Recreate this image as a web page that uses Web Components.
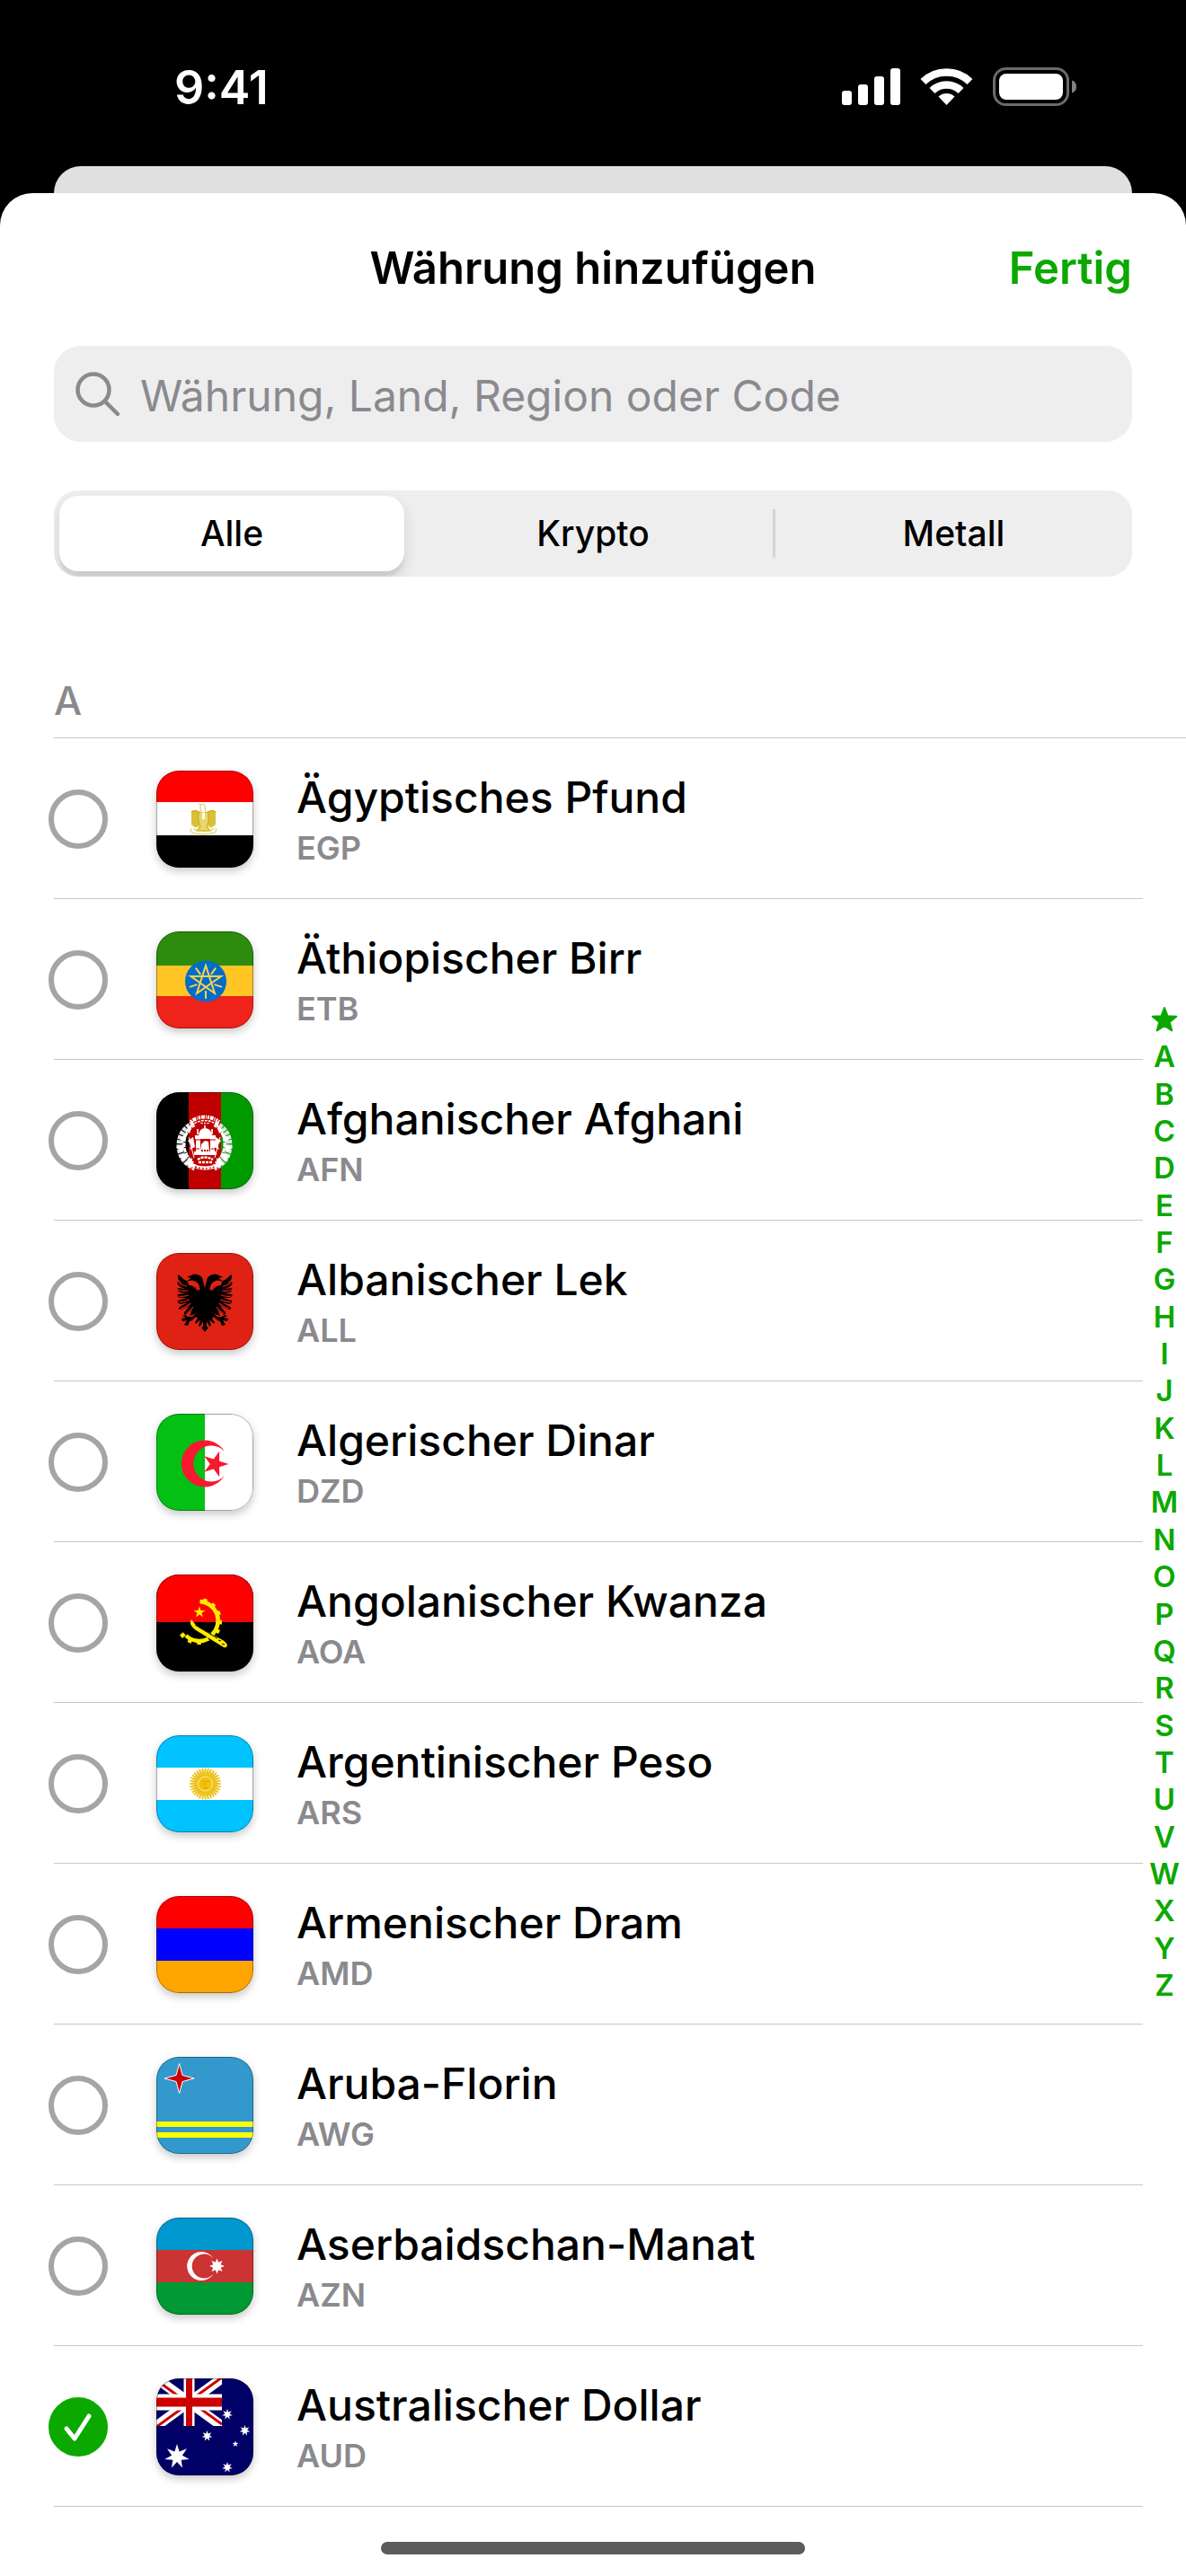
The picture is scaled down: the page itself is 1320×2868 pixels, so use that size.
<!DOCTYPE html>
<html lang="de">
<head>
<meta charset="utf-8">
<meta name="viewport" content="width=device-width, initial-scale=1">
<title>Währung hinzufügen</title>
<style>
    body {
        margin: 0;
        background-color: #000;
        font-family: Inter, "Liberation Sans", sans-serif;
        --accent: #0ba800;
        --fill: #eeeeef;
        --muted: #8a8a8e;
        --line: #c6c6c8;
    }
</style>
</head>
<body>
<currency-app>
    <status-bar slot="status">9:41</status-bar>
    <sheet-header slot="header">Währung hinzufügen</sheet-header>
    <search-field slot="search" placeholder="Währung, Land, Region oder Code"></search-field>
    <segment-control slot="segments" options="Alle,Krypto,Metall"></segment-control>
    <section-title slot="title">A</section-title>
    <currency-row code="EGP">Ägyptisches Pfund</currency-row>
    <currency-row code="ETB">Äthiopischer Birr</currency-row>
    <currency-row code="AFN">Afghanischer Afghani</currency-row>
    <currency-row code="ALL">Albanischer Lek</currency-row>
    <currency-row code="DZD">Algerischer Dinar</currency-row>
    <currency-row code="AOA">Angolanischer Kwanza</currency-row>
    <currency-row code="ARS">Argentinischer Peso</currency-row>
    <currency-row code="AMD">Armenischer Dram</currency-row>
    <currency-row code="AWG">Aruba-Florin</currency-row>
    <currency-row code="AZN">Aserbaidschan-Manat</currency-row>
    <currency-row code="AUD" checked>Australischer Dollar</currency-row>
    <letter-index slot="index"></letter-index>
</currency-app>

<script>
// points of a star, first tip at the given angle
function star(cx, cy, r, inner, n, start = -90) {
    const pts = [];
    for (let i = 0; i < n * 2; i++) {
        const a = (start + i * 180 / n) * Math.PI / 180;
        const rad = i % 2 ? inner : r;
        pts.push((cx + rad * Math.cos(a)).toFixed(2) + ',' + (cy + rad * Math.sin(a)).toFixed(2));
    }
    return pts.join(' ');
}

// n copies of a shape turned around a point
function spin(shape, n, cx, cy, from = 0, step = 360 / n) {
    let out = '';
    for (let i = 0; i < n; i++) {
        out += `<g transform="rotate(${from + i * step} ${cx} ${cy})">${shape}</g>`;
    }
    return out;
}

function bands(a, b, c, y1 = 36, y2 = 72) {
    return `<rect width="108" height="${y1}" fill="${a}"/>
        <rect y="${y1}" width="108" height="${y2 - y1}" fill="${b}"/>
        <rect y="${y2}" width="108" height="${108 - y2}" fill="${c}"/>`;
}

const eagleHalf = `
    <path d="M54 39L52 31Q52 27 48 25Q43 22 38 25L34 27L39 28Q35 30 34 32Q40 29 44 32Q48 34 48 39L46 41Q44 35 37 35Q35 34 34 31
        Q30 30 27 26L24 24Q23 29 27 32L31 34L24 32Q22 35 27 38L32 40L24 39Q23 43 27 44L33 45L24 46Q22 49 27 50L34 50
        L24 53Q23 56 27 57L35 55L26 60Q23 63 28 63L37 59L32 65Q29 68 33 69L40 63L37 70L43 68L47 65L40 71L35 71Q32 68 29 70L33 72L28 73
        L29 76L34 75L31 80L35 81L37 76L40 75L44 71L46 73L43 77Q44 80 46 77L49 74L47 81Q49 83 51 78L52 76L52 82L50 83L54 88Z"/>
    <path d="M46 42Q43 36 36 35M25 33Q30 37 34 37M24 41Q30 43 35 42M24 48Q30 49 36 47M25 55Q31 54 37 52M27 62Q34 60 38 56M33 68Q39 63 41 60" fill="none" stroke="#e02214" stroke-width="1.2"/>
    <path d="M36 35Q45 34 48 41" fill="none" stroke="#e02214" stroke-width="2"/>`;

const wreathHalf = `
    <path d="M42 35Q26 42 26 60Q27 77 43 84" fill="none" stroke="#e4e4e4" stroke-width="7" stroke-dasharray="4 1"/>
    <path d="M38 40Q30 49 31 60Q32 71 41 79" fill="none" stroke="#fff" stroke-width="3" stroke-dasharray="5 1"/>
    <path d="M33 42L40 35L37 46ZM25 51L35 46L30 56ZM22 61L33 57L28 67ZM25 71L35 67L31 77ZM32 80L40 73L40 84Z" fill="#fff"/>
    <path d="M36 50L42 73" stroke="#fff" stroke-width="1"/>
    <path d="M35 54L41 50L43 61L37 64L39 59Z" fill="#fff"/>`;

const flags = {
    EGP: bands('#f00', '#fff', '#000', 35, 72) + `
        <path d="M39 46L44 44L48 47V62L44 64L39 61ZM66 46L61 44L57 47V62L61 64L66 61Z" fill="#ecdc80"/>
        <g fill="none" stroke="#cfae0c">
            <path d="M40 46V60M42 45V62M44 45V63M46 45V62M59 45V62M61 45V63M63 45V62M65 46V60" stroke-width="1.2"/>
            <path d="M39 46Q43 43 47 46L50 47M66 46Q62 43 58 46L55 47" stroke-width="1.5"/>
            <path d="M50 46L49 42Q48 39 51 37Q55 37 54 41L55 46M50 38L47 37" stroke="#dcc64a" stroke-width="1"/>
            <path d="M47 47Q46 59 49 62L45 67H60L56 62Q59 58 58 47" fill="#e7d56e" stroke-width="1.2"/>
            <path d="M39 64Q36 69 44 70Q52 72 60 70Q69 69 66 64M41 65Q52 70 64 65" stroke="#dcc64a" stroke-width="1"/>
        </g>
        <path d="M49 46H56V53L52 57L49 53Z" fill="#e7d56e"/><path d="M51 47H54V54H51Z" fill="#fff"/>`,
    ETB: bands('#2d8b0e', '#ffc625', '#ef2319', 38, 72) + `
        <circle cx="55" cy="55.6" r="23" fill="#006dc9"/>
        <g fill="none" stroke="#ffd24c" stroke-width="2">
            <polygon points="55,38 65,69 38.5,50 72,50 45,69"/>
            ${spin('<path d="M55 66V75"/>', 5, 55, 56)}
        </g>`,
    AFN: `<path d="M0 0H36V108H0Z"/><path d="M36 0H72V108H36Z" fill="#c00000"/><path d="M72 0H108V108H72Z" fill="#009900"/>
        ${wreathHalf}<g transform="translate(107 0) scale(-1 1)">${wreathHalf}</g>
        <path d="M38 33Q54 22 70 33" fill="none" stroke="#fff" stroke-width="4" stroke-dasharray="2 1 4 1 1 1"/>
        <path d="M39 37Q54 26 69 37" fill="none" stroke="#fff" stroke-width="1.5" stroke-dasharray="3 1"/>
        <path d="M49 34L52 35M54 33V36M56 35L59 34" stroke="#fff" stroke-width="1"/>
        <path d="M54 37V40M46 41V47M62 41V47" stroke="#fff" stroke-width="1.6"/>
        <path d="M47 50Q47 40 54 40Q62 40 62 50ZM43 48H66V52H43ZM44 52H49V66H44ZM60 52H65V66H60ZM42 66H67V70H42Z" fill="#fff"/>
        <path d="M49 66L50 58L54 54L58 55L59 66Z" fill="#fff"/>
        <path d="M44 53H65M44 63H48M61 63H65" stroke="#c00000"/>
        <path d="M50 65H60" stroke="#c00000" stroke-width="2" stroke-dasharray="2 1"/>
        <path d="M46 75Q54 70 63 75M47 78H62" fill="none" stroke="#fff" stroke-width="2.5" stroke-dasharray="3 1"/>
        <path d="M36 77Q54 88 72 77L70 82Q54 91 39 82Z" fill="#fff"/>
        <path d="M43 83Q54 87 65 83" fill="none" stroke="#c00000" stroke-width="1.5" stroke-dasharray="2 2"/>`,
    ALL: `<rect width="108" height="108" fill="#e02214"/>${eagleHalf}
        <g transform="translate(108 0) scale(-1 1)">${eagleHalf}</g>`,
    DZD: `<rect width="108" height="108" fill="#fff"/><rect width="54" height="108" fill="#02c114"/>
        <path d="M76 42A26 26 0 1 0 76 69A20 20 0 1 1 76 42Z" fill="#f6192f"/>
        <polygon points="${star(65.5, 56, 15, 5.7, 5, 0)}" fill="#f6192f"/>`,
    AOA: `<rect width="108" height="108" fill="#000"/><rect width="108" height="53" fill="#f00"/>
        <g fill="#ffec00">
            <path d="M48.5 30A21.5 21.5 0 0 1 62 67M58 71.5A21.5 21.5 0 0 1 33 68" fill="none" stroke="#ffec00" stroke-width="4.5"/>
            ${spin('<rect x="45" y="26" width="4.5" height="5"/>', 5, 47, 52, 17, 25)}
            ${spin('<rect x="45" y="26" width="4.5" height="5"/>', 3, 47, 52, 178, 25)}
            <polygon points="${star(48, 42, 6.8, 2.6, 5)}"/>
            <path d="M39 50Q42 55 48 59L72 72Q78 75 79 79Q78 82 75 81L44 62Q37 57 38 52Z"/>
        </g>
        <path d="M43 56L68 71M69 73L72 74M73 77L76 78" stroke="#000" stroke-width="1" fill="none"/>`,
    ARS: bands('#00c3ff', '#fff', '#00c3ff') + `
        <g fill="#ecc21c">${spin('<path d="M53 46L53.7 36.5H55.3L56 46Z"/>', 32, 54.5, 54)}</g>
        <circle cx="54.5" cy="54" r="8" fill="#f2c40a" stroke="#fbe9a0"/>
        <path d="M50 52Q52 50 54 52M55 52Q57 50 59 52M54 53V56M52 58Q54 60 57 58" fill="none" stroke="#d6a10c" stroke-width="1"/>`,
    AMD: bands('#f00', '#00f', '#ffa500'),
    AWG: `<rect width="108" height="108" fill="#3399cc"/><path d="M0 72H108V78H0ZM0 84H108V90H0Z" fill="#ff0"/>
        <polygon points="${star(25.6, 24, 16.5, 5, 4)}" fill="#c00" stroke="#fff" stroke-width="1"/>`,
    AZN: bands('#0098cf', '#cc3333', '#009933') + `
        <path d="M64 46A16 16 0 1 0 64 62A13.5 13.5 0 1 1 64 46Z" fill="#fff"/>
        <polygon points="${star(67.5, 54, 8.5, 4.5, 8)}" fill="#fff"/>`,
    AUD: `<rect width="108" height="108" fill="#000066"/>
        <clipPath id="canton"><path d="M0 0H73V53H0Z"/></clipPath>
        <g clip-path="url(#canton)">
            <path d="M0 0L73 53M73 0L0 53" stroke="#fff" stroke-width="11"/>
            <path d="M0 2L36 28M37 25L73 51M73 -1L37 25M36 28L0 54" stroke="#c00" stroke-width="3"/>
            <path d="M36.5 0V53" stroke="#fff" stroke-width="12"/>
            <path d="M0 26.5H73" stroke="#fff" stroke-width="18"/>
            <path d="M36.5 0V53" stroke="#c00" stroke-width="7"/>
            <path d="M0 26.5H73" stroke="#c00" stroke-width="10"/>
        </g>
        <g fill="#fff">
            <polygon points="${star(23, 87, 14, 6, 7)}"/>
            <polygon points="${star(79, 40, 6, 2.7, 7)}"/>
            <polygon points="${star(56.5, 64, 6, 2.7, 7)}"/>
            <polygon points="${star(98.5, 58, 6, 2.7, 7)}"/>
            <polygon points="${star(79, 99, 6, 2.7, 7)}"/>
            <polygon points="${star(88, 73, 3.5, 1.5, 5)}"/>
        </g>`
};

class CurrencyApp extends HTMLElement {
    constructor() {
        super();
        this.attachShadow({ mode: 'open' }).innerHTML = `
            <style>
                :host {
                    display: flex;
                    flex-direction: column;
                    min-height: 100vh;
                }
                .behind {
                    height: 30px;
                    margin: 0 60px;
                    border-radius: 30px 30px 0 0;
                    background-color: #e0e0e0;
                }
                main {
                    display: flex;
                    flex: 1;
                    flex-direction: column;
                    border-radius: 36px 36px 0 0;
                    background-color: #fff;
                }
                .list {
                    display: flex;
                    align-items: flex-start;
                }
                .rows {
                    flex: 1;
                }
                .home {
                    width: 472px;
                    height: 14px;
                    margin: auto auto 24px;
                    border-radius: 7px;
                    background-color: #5c5c5c;
                }
            </style>
            <slot name="status"></slot>
            <div class="behind"></div>
            <main>
                <slot name="header"></slot>
                <slot name="search"></slot>
                <slot name="segments"></slot>
                <slot name="title"></slot>
                <div class="list">
                    <div class="rows"><slot></slot></div>
                    <slot name="index"></slot>
                </div>
                <div class="home"></div>
            </main>
        `;
    }
}

class StatusBar extends HTMLElement {
    constructor() {
        super();
        this.attachShadow({ mode: 'open' }).innerHTML = `
            <style>
                :host {
                    display: flex;
                    justify-content: space-between;
                    padding: 68px 120px 57px 194px;
                    color: #fff;
                    font-size: 52px;
                    font-weight: 600;
                    line-height: 60px;
                }
                svg {
                    display: block;
                }
            </style>
            <slot></slot>
            <svg width="270" height="60" viewBox="930 68 270 60" fill="#fff" aria-hidden="true">
                <rect x="937" y="101" width="11" height="16" rx="3"/>
                <rect x="955" y="94" width="11" height="23" rx="3"/>
                <rect x="973" y="85" width="11" height="32" rx="3"/>
                <rect x="991" y="76" width="11" height="41" rx="3"/>
                <path d="M1027.5 91A37.5 37.5 0 0 1 1079.5 91M1037.5 101A23 23 0 0 1 1069.5 101" fill="none" stroke="#fff" stroke-width="8.5"/>
                <path d="M1053.5 117L1044.5 107.5A13.5 13.5 0 0 1 1062.5 107.5Z"/>
                <rect x="1106.5" y="76.5" width="82" height="40" rx="13" fill="none" stroke="#6b6b6b" stroke-width="3"/>
                <rect x="1112" y="82" width="71" height="29" rx="8"/>
                <path d="M1193 89.5Q1198 91 1198 96.5Q1198 102 1193 103.5Z" fill="#808080"/>
            </svg>
        `;
    }
}

class SheetHeader extends HTMLElement {
    constructor() {
        super();
        this.attachShadow({ mode: 'open' }).innerHTML = `
            <style>
                :host {
                    display: grid;
                    grid-template-columns: 1fr auto 1fr;
                    align-items: center;
                    padding: 54px 60px 56px;
                    font-size: 49px;
                    line-height: 60px;
                }
                h1 {
                    grid-column: 2;
                    margin: 0;
                    font-size: inherit;
                    font-weight: 600;
                }
                button {
                    justify-self: end;
                    padding: 0;
                    border: 0;
                    background: none;
                    color: var(--accent);
                    font: inherit;
                    font-weight: 600;
                }
            </style>
            <h1><slot></slot></h1>
            <button type="button">Fertig</button>
        `;
    }
}

class SearchField extends HTMLElement {
    constructor() {
        super();
        const text = this.getAttribute('placeholder');
        this.attachShadow({ mode: 'open' }).innerHTML = `
            <style>
                :host {
                    display: block;
                    margin: 0 60px;
                }
                label {
                    display: flex;
                    align-items: center;
                    gap: 20px;
                    height: 107px;
                    padding: 0 22px;
                    border-radius: 30px;
                    background-color: var(--fill);
                }
                svg {
                    flex: none;
                }
                input {
                    flex: 1;
                    height: 72px;
                    padding: 4px 0 0;
                    border: 0;
                    outline: 0;
                    background: none;
                    font: inherit;
                    font-size: 48px;
                }
                input::placeholder {
                    color: var(--muted);
                    opacity: 1;
                }
            </style>
            <label>
                <svg width="54" height="54" viewBox="0 0 54 54" fill="none" stroke="#8a8a8e" stroke-width="4.5" stroke-linecap="round" aria-hidden="true">
                    <circle cx="22" cy="22" r="17.5"/>
                    <path d="M35 35L49 49"/>
                </svg>
                <input type="text" placeholder="${text}" aria-label="${text}">
            </label>
        `;
    }
}

class SegmentControl extends HTMLElement {
    constructor() {
        super();
        const items = this.getAttribute('options').split(',').map((name, i) => `
            <label><input type="radio" name="kind" ${i === 0 ? 'checked' : ''}><span>${name}</span></label>
        `).join('');
        this.attachShadow({ mode: 'open' }).innerHTML = `
            <style>
                :host {
                    display: block;
                    margin: 54px 60px 0;
                }
                .track {
                    display: grid;
                    grid-template-columns: repeat(3, 1fr);
                    padding: 6px 0;
                    border-radius: 27px;
                    background-color: var(--fill);
                    overflow: hidden;
                }
                label {
                    display: flex;
                    align-items: center;
                }
                label:first-child {
                    padding: 0 10px 0 6px;
                }
                label:last-child::before {
                    content: "";
                    width: 3px;
                    height: 54px;
                    background-color: #d4d4d6;
                }
                input {
                    appearance: none;
                    width: 0;
                    height: 0;
                    margin: 0;
                }
                span {
                    flex: 1;
                    border-radius: 21px;
                    font-size: 39px;
                    font-weight: 500;
                    line-height: 84px;
                    text-align: center;
                }
                input:checked + span {
                    background-color: #fff;
                    box-shadow: 0 8px 16px rgba(0, 0, 0, 0.12), 0 6px 2px rgba(0, 0, 0, 0.05);
                }
            </style>
            <div class="track" role="radiogroup">${items}</div>
        `;
    }
}

class SectionTitle extends HTMLElement {
    constructor() {
        super();
        this.attachShadow({ mode: 'open' }).innerHTML = `
            <style>
                :host {
                    display: block;
                    margin-left: 60px;
                    padding: 112px 0 14px;
                    border-bottom: 1px solid var(--line);
                    color: var(--muted);
                }
                h2 {
                    margin: 0;
                    font-size: 44px;
                    font-weight: 500;
                    line-height: 53px;
                }
            </style>
            <h2><slot></slot></h2>
        `;
    }
}

class CurrencyRow extends HTMLElement {
    constructor() {
        super();
        const code = this.getAttribute('code');
        this.attachShadow({ mode: 'open' }).innerHTML = `
            <style>
                :host {
                    display: block;
                    margin-left: 54px;
                }
                label {
                    display: flex;
                    align-items: center;
                    padding: 36px 0 34px;
                }
                hr {
                    height: 1px;
                    margin: 0 0 0 6px;
                    border: 0;
                    background-color: var(--line);
                }
                input {
                    appearance: none;
                    flex: none;
                    width: 66px;
                    height: 66px;
                    margin: 0;
                    border: 6px solid #a5a5a5;
                    border-radius: 50%;
                }
                .box {
                    display: grid;
                }
                .box > * {
                    grid-area: 1 / 1;
                }
                .tick {
                    width: 66px;
                    height: 66px;
                    visibility: hidden;
                }
                input:checked {
                    border-color: var(--accent);
                    background-color: var(--accent);
                }
                input:checked + .tick {
                    visibility: visible;
                }
                .flag {
                    width: 108px;
                    height: 108px;
                    margin: 0 48px 0 54px;
                    border-radius: 25px;
                    box-shadow: 0 4px 10px rgba(0, 0, 0, 0.22);
                    overflow: hidden;
                }
                .flag svg {
                    display: block;
                }
                .text {
                    display: flex;
                    flex-direction: column;
                    gap: 4px;
                }
                .name {
                    font-size: 48px;
                    font-weight: 500;
                    line-height: 60px;
                }
                .code {
                    color: var(--muted);
                    font-size: 36px;
                    font-weight: 600;
                    line-height: 44px;
                }
            </style>
            <label>
                <span class="box">
                    <input type="checkbox" ${this.hasAttribute('checked') ? 'checked' : ''}>
                    <svg class="tick" viewBox="0 0 66 66" fill="none" stroke="#fff" stroke-width="5" stroke-linecap="round" stroke-linejoin="round" aria-hidden="true">
                        <path d="M20 35L29 46L45 21"/>
                    </svg>
                </span>
                <span class="flag">
                    <svg width="108" height="108" viewBox="0 0 108 108" aria-hidden="true">
                        ${flags[code]}
                        <rect x="0.5" y="0.5" width="107" height="107" rx="24.5" fill="none" stroke="#000" stroke-opacity="0.35"/>
                    </svg>
                </span>
                <span class="text">
                    <span class="name"><slot></slot></span>
                    <span class="code">${code}</span>
                </span>
            </label>
            <hr>
        `;
    }
}

class LetterIndex extends HTMLElement {
    constructor() {
        super();
        const letters = [...'ABCDEFGHIJKLMNOPQRSTUVWXYZ'].map(c => `<a href="#${c}">${c}</a>`).join('');
        this.attachShadow({ mode: 'open' }).innerHTML = `
            <style>
                :host {
                    display: block;
                    width: 48px;
                    margin-top: 293px;
                }
                nav {
                    display: flex;
                    flex-direction: column;
                    justify-content: space-between;
                    min-height: 1116px;
                }
                a {
                    color: var(--accent);
                    font-size: 33px;
                    font-weight: 600;
                    line-height: 41px;
                    text-align: center;
                    text-decoration: none;
                }
                svg {
                    display: block;
                    margin: 0 auto;
                }
            </style>
            <nav aria-label="Index">
                <a href="#fav" aria-label="Favoriten">
                    <svg width="32" height="41" viewBox="0 0 32 41"><polygon points="${star(16, 21, 14, 6, 5)}" fill="#0ba800" stroke="#0ba800" stroke-width="2" stroke-linejoin="round"/></svg>
                </a>
                ${letters}
            </nav>
        `;
    }
}

customElements.define('currency-app', CurrencyApp);
customElements.define('status-bar', StatusBar);
customElements.define('sheet-header', SheetHeader);
customElements.define('search-field', SearchField);
customElements.define('segment-control', SegmentControl);
customElements.define('section-title', SectionTitle);
customElements.define('currency-row', CurrencyRow);
customElements.define('letter-index', LetterIndex);
</script>
</body>
</html>
